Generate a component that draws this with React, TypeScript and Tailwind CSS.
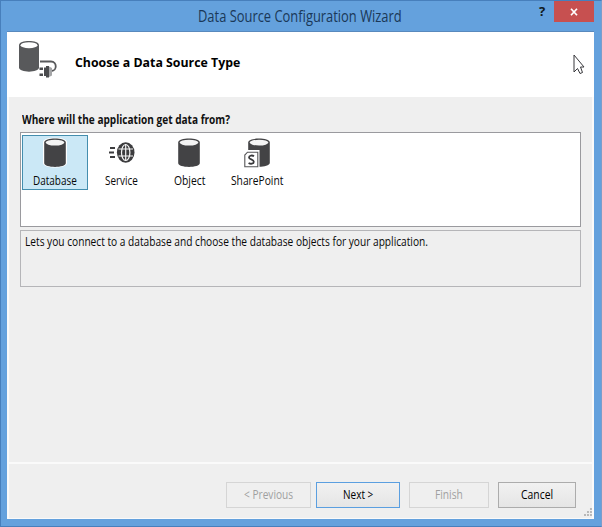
import { useLayoutEffect, useRef, useState } from "react";

type FitProps = { text: string; width: number; className?: string };

// A single line of text condensed or widened to occupy exactly `width` pixels.
function FitText({ text, width, className = "" }: FitProps) {
  const ref = useRef<HTMLSpanElement>(null);
  const [scale, setScale] = useState(1);
  useLayoutEffect(() => {
    if (ref.current) setScale(width / ref.current.offsetWidth);
  }, [width, text]);
  return (
    <span className={`block shrink-0 whitespace-nowrap ${className}`} style={{ width }}>
      <span ref={ref} className="inline-block origin-left" style={{ transform: `scaleX(${scale})` }}>
        {text}
      </span>
    </span>
  );
}

function Cylinder({ halo = false }: { halo?: boolean }) {
  return (
    <svg width="26" height="32" viewBox="0 0 26 32">
      {halo && <path d="M1 5C1 -.8 25 -.8 25 5V26C25 32 1 32 1 26Z" fill="#fff" />}
      <path d="M2.2 5.5C2.2 .3 23.8 .3 23.8 5.5V26C23.8 31.2 2.2 31.2 2.2 26Z" fill="#434345" />
      <ellipse cx="13" cy="5.6" rx="9.4" ry="2.9" fill="#f4f4f4" />
    </svg>
  );
}

function ServiceIcon() {
  return (
    <svg width="26" height="32" viewBox="0 0 26 32" fill="none">
      <path d="M1 11H6M0 15.5H5M1 20H6" stroke="#3c3c3e" strokeWidth="1.8" />
      <ellipse cx="16.7" cy="15.5" rx="8.8" ry="10.2" fill="#3c3c3e" />
      <g stroke="#f4f4f4" strokeWidth="1.2">
        <ellipse cx="16.7" cy="15.5" rx="4.2" ry="8" />
        <path d="M16.7 7V24M9.5 12H24M9.5 19H24" />
      </g>
    </svg>
  );
}

function SharePointIcon() {
  return (
    <svg width="28" height="32" viewBox="0 0 28 32">
      <path d="M5.2 5.5C5.2 .3 26.8 .3 26.8 5.5V25.8C26.8 28.5 21 29.8 16 29.8H5.2Z" fill="#434345" />
      <ellipse cx="16" cy="5.6" rx="9.4" ry="2.9" fill="#f4f4f4" />
      <rect x="0" y="13" width="16.5" height="19" fill="#fff" />
      <path d="M4.5 15.2H14.8V29.8H1.8V18Z" fill="#fff" stroke="#555557" strokeWidth="1.1" />
      <path d="M11 19.2C9.5 18.1 6 18.2 6 20.4C6 22.7 10.8 22 10.8 24.7C10.8 27 7.5 27.2 5.6 26" fill="none" stroke="#39393b" strokeWidth="1.8" />
    </svg>
  );
}

function SourceIcon() {
  return (
    <svg width="40" height="40" viewBox="0 0 40 40">
      <path d="M1 5C1 -.5 21 -.5 21 5V27.5C21 33 1 33 1 27.5Z" fill="#58595b" />
      <ellipse cx="11" cy="5.2" rx="8.4" ry="3" fill="#fff" />
      <path d="M22 21.5H33C39.5 21.5 39 31 33.5 31" fill="none" stroke="#58595b" strokeWidth="1.8" />
      <path d="M21.5 27.5H25V30H21.5ZM21.5 33.5H25V36H21.5Z" fill="#4b4c4e" />
      <path d="M26 27.5H28V26H31V37.5H28V36H26Z" fill="#4b4c4e" />
      <path d="M31 26.5L34 28V35.5L31 37Z" fill="#a4a5a7" />
    </svg>
  );
}

const sources = [
  { name: "Database", width: 44, icon: <Cylinder halo />, selected: true },
  { name: "Service", width: 33, icon: <ServiceIcon /> },
  { name: "Object", width: 31, icon: <Cylinder /> },
  { name: "SharePoint", width: 52, icon: <SharePointIcon /> },
];

export default function App() {
  return (
    <div className="relative flex h-[527px] w-[602px] flex-col overflow-hidden border border-[#477fbc] border-r-[#7c9dcb] bg-[#64a1dd] font-['Open_Sans','Noto_Sans',sans-serif] text-[12px] leading-4 text-[#080808]">
      <header className="flex h-[30px] shrink-0 items-start pl-[197px]">
        <FitText text="Data Source Configuration Wizard" width={204} className="mt-[5px] text-[15.5px] leading-5 text-[#1a3858]" />
        <span className="ml-[137px] mt-[2px] w-2 text-[13px] font-bold leading-4 text-[#101820]">?</span>
        <button className="ml-[7px] flex h-[21px] w-[40px] items-center justify-center bg-[#c75050]">
          <svg width="8" height="8" viewBox="0 0 8 8"><path d="M1 .7L7 7.3M7 .7L1 7.3" stroke="#fff" strokeWidth="1.7" /></svg>
        </button>
      </header>
      <main className="ml-[6px] flex h-[488px] w-[587px] shrink-0 flex-col border-t border-[#5889bd] bg-[#fafafa] px-[2px] pb-px">
        <section className="-mx-[2px] flex h-[65px] shrink-0 items-start bg-white pl-[11px] pt-[8px]">
          <SourceIcon />
          <FitText text="Choose a Data Source Type" width={165} className="ml-[17px] mt-[14px] text-[13px] font-bold text-black" />
        </section>
        <section className="flex h-[365px] shrink-0 flex-col bg-[#efefef] pl-[11px] pt-[15px]">
          <FitText text="Where will the application get data from?" width={208} className="ml-[2px] font-bold leading-4 text-[#111]" />
          <div className="mt-[4px] flex h-[95px] w-[561px] shrink-0 items-start border border-[#9a9a9e] bg-white pl-px pt-[2px]">
            {sources.map((s) => (
              <div
                key={s.name}
                className={s.selected
                  ? "flex h-[55px] w-[66px] flex-col items-center border border-[#448eae] bg-[#cbe8f6] pt-px"
                  : "flex h-[55px] w-[67.5px] flex-col items-center pt-[2px]"}
              >
                {s.icon}
                <FitText text={s.name} width={s.width} className="mt-[4px]" />
              </div>
            ))}
          </div>
          <div className="mt-[3px] h-[57px] w-[561px] shrink-0 border border-[#b5b5b8] pl-[4px] pt-[3px]">
            <FitText text="Lets you connect to a database and choose the database objects for your application." width={403} />
          </div>
        </section>
        <footer className="mt-[2px] flex h-[54px] shrink-0 items-start bg-[#efefef] pl-[217px] pt-[18px]">
          <button className="flex h-[26px] w-[86px] items-center justify-center border border-[#d5d5d5] text-[#a0a0a0]">
            <FitText text="&lt; Previous" width={49} />
          </button>
          <button className="ml-[5px] flex h-[26px] w-[84px] items-center justify-center border border-[#5b9fe0] bg-linear-to-b from-[#f1f1f1] to-[#e5e5e5] text-black">
            <FitText text="Next &gt;" width={30} />
          </button>
          <button className="ml-[9px] flex h-[26px] w-[80px] items-center justify-center border border-[#d5d5d5] text-[#a0a0a0]">
            <FitText text="Finish" width={28} />
          </button>
          <button className="ml-[9px] flex h-[26px] w-[79px] items-center justify-center border border-[#acacac] bg-linear-to-b from-[#f1f1f1] to-[#e5e5e5] text-black">
            <FitText text="Cancel" width={32} />
          </button>
          <svg className="ml-[8px] mt-[26px]" width="8" height="9" viewBox="0 0 8 9" fill="#b8b8b8">
            <path d="M6 0h2v2H6zM6 3h2v2H6zM3 3h2v2H3zM0 6h2v2H0zM3 6h2v2H3zM6 6h2v2H6z" />
          </svg>
        </footer>
      </main>
      <svg className="absolute left-[572px] top-[53px]" width="13" height="21" viewBox="0 0 13 21">
        <path d="M1 1V18L4.5 14.5L7 19.5L9.5 18.5L7.5 13H11Z" fill="#fff" stroke="#38383c" strokeWidth="1" />
      </svg>
    </div>
  );
}
